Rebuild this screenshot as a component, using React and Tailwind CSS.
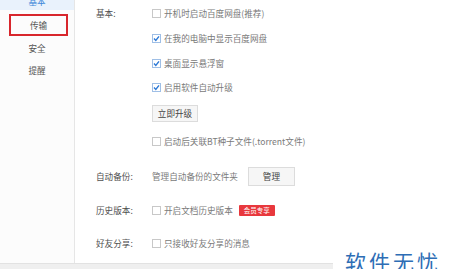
import React from "react";

const font = { fontFamily: '"Noto Sans CJK SC", "Noto Sans", sans-serif' };

function Box({ checked }) {
  return (
    <span
      className={
        "flex h-[9px] w-[9px] shrink-0 items-center justify-center border bg-white " +
        (checked ? "border-[#9fbfe6]" : "border-[#c8c8c8]")
      }
    >
      {checked && (
        <svg width="7" height="7" viewBox="0 0 7 7">
          <path d="M1 3.6 L2.8 5.4 L6 1.4" fill="none" stroke="#2b78d6" strokeWidth="1.4" />
        </svg>
      )}
    </span>
  );
}

function Check({ checked, children }) {
  return (
    <div className="flex items-center gap-[3px]">
      <Box checked={checked} />
      <span className="text-[#7a7a7a]">{children}</span>
    </div>
  );
}

function Row({ label, className, children }) {
  return (
    <div className={"flex items-center " + className}>
      <div className="w-[56px] shrink-0 text-[#505050]">{label}</div>
      <div className="flex items-center">{children}</div>
    </div>
  );
}

export default function App() {
  return (
    <div
      className="relative h-[269px] w-[455px] overflow-hidden bg-white text-[8.6px] leading-none"
      style={font}
    >
      <div className="flex h-[263px]">
        <aside className="w-[75px] shrink-0 border-r border-[#e6e6e6] bg-[#fcfcfc] text-[#555]">
          <div className="-mt-[8px] flex h-[18px] items-center justify-center bg-[#e9f2fc] text-[#3a86d8]">
            基本
          </div>
          <div className="ml-[9px] mt-[4px] flex h-[22px] w-[59px] items-center justify-center border-2 border-[#d8262c]">
            传输
          </div>
          <div className="mt-[1px] flex h-[22px] items-center justify-center">安全</div>
          <div className="flex h-[22px] items-center justify-center">提醒</div>
        </aside>
        <main className="flex-1 pl-[21px] pt-[4px]">
          <Row label="基本:" className="h-[18px]">
            <Check>开机时启动百度网盘(推荐)</Check>
          </Row>
          <Row label="" className="mt-[7px] h-[18px]">
            <Check checked>在我的电脑中显示百度网盘</Check>
          </Row>
          <Row label="" className="mt-[7px] h-[18px]">
            <Check checked>桌面显示悬浮窗</Check>
          </Row>
          <Row label="" className="mt-[6px] h-[18px]">
            <Check checked>启用软件自动升级</Check>
          </Row>
          <Row label="" className="mt-[9px] h-[17px]">
            <button className="flex h-[17px] w-[46px] items-center justify-center border border-[#dcdcdc] bg-[#f6f6f6] text-[#444]">
              立即升级
            </button>
          </Row>
          <Row label="" className="mt-[10px] h-[18px]">
            <Check>启动后关联BT种子文件(.torrent文件)</Check>
          </Row>
          <Row label="自动备份:" className="mt-[17px] h-[19px]">
            <span className="text-[#7a7a7a]">管理自动备份的文件夹</span>
            <button className="ml-[10px] flex h-[19px] w-[47px] items-center justify-center border border-[#dcdcdc] bg-[#f6f6f6] text-[#444]">
              管理
            </button>
          </Row>
          <Row label="历史版本:" className="mt-[15px] h-[18px]">
            <Check>开启文档历史版本</Check>
            <span className="ml-[6px] flex h-[11px] w-[36px] items-center justify-center rounded-[1px] bg-[#e8383d] text-[6.5px] text-white">
              会员专享
            </span>
          </Row>
          <Row label="好友分享:" className="mt-[15px] h-[18px]">
            <Check>只接收好友分享的消息</Check>
          </Row>
        </main>
      </div>
      <div className="h-[6px] border-t border-[#e2e2e2] bg-[#efefef]" />
      <div className="absolute bottom-0 right-0 flex h-[19px] w-[122px] items-start bg-white pl-[12px]">
        <span className="mt-[1px] text-[21px] leading-[21px] tracking-[3px] text-[#2d6db5]">
          软件无忧
        </span>
      </div>
    </div>
  );
}
